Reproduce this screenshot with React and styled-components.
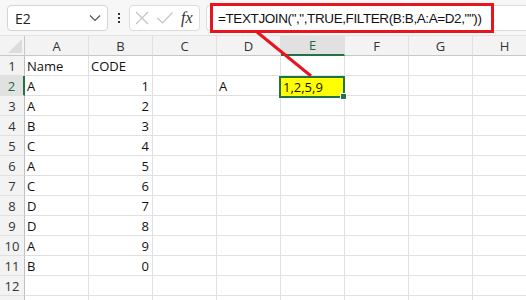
import React from 'react';
import styled, { createGlobalStyle } from 'styled-components';

const Global = createGlobalStyle`
  html, body { margin: 0; padding: 0; background: #ffffff; }
  body { font-family: "Open Sans", "Liberation Sans", sans-serif; overflow: hidden; }
`;

const Sheet = styled.div`
  position: relative;
  width: 526px;
  height: 300px;
  overflow: hidden;
  background: #fff;
`;

const Toolbar = styled.div`
  height: 36px;
  background: #f7f7f7;
  display: flex;
  align-items: flex-start;
  padding: 5px 0 0 7px;
  box-sizing: border-box;
  border-bottom: 1px solid #e3e3e3;
`;

const NameBox = styled.div`
  width: 101px;
  height: 26px;
  box-sizing: border-box;
  background: #fff;
  border: 1px solid #d4d4d4;
  border-radius: 4px;
  display: flex;
  align-items: center;
  justify-content: space-between;
  padding: 0 6px 0 7px;
  font-size: 14px;
  color: #222;
`;

const Dots = styled.div`
  width: 21px;
  display: flex;
  flex-direction: column;
  align-items: center;
  gap: 2px;
  padding-top: 8px;
  span {
    width: 2px;
    height: 2px;
    background: #333;
  }
`;

const FxGroup = styled.div`
  width: 71px;
  height: 26px;
  box-sizing: border-box;
  background: #fff;
  border: 1px solid #dcdcdc;
  border-radius: 4px;
  display: flex;
  align-items: center;
  padding-left: 4px;
  gap: 6px;
`;

const FxLabel = styled.span`
  font-family: "Liberation Serif", "DejaVu Serif", serif;
  font-style: italic;
  font-size: 16px;
  color: #333;
  margin-left: 1px;
`;

const FormulaBar = styled.div`
  flex: 1;
  margin-left: 6px;
  height: 26px;
  box-sizing: border-box;
  background: #fff;
  border: 1px solid #dcdcdc;
  border-right: none;
  border-radius: 4px 0 0 4px;
`;

const Highlight = styled.div`
  position: absolute;
  left: 210px;
  top: 3px;
  width: 284px;
  height: 30px;
  box-sizing: border-box;
  border: 3px solid #e8141f;
  display: flex;
  align-items: center;
  padding-left: 5px;
  font-family: "Liberation Sans", sans-serif;
  font-size: 13.5px;
  letter-spacing: -0.4px;
  color: #111;
  white-space: nowrap;
`;

const Arrow = styled.svg`
  position: absolute;
  left: 0;
  top: 0;
  pointer-events: none;
`;

const Grid = styled.div`
  display: grid;
  grid-template-columns: 25px repeat(8, 64px);
  grid-auto-rows: 20px;
  font-size: 13px;
  color: #111;
`;

const Corner = styled.div`
  background: #f3f3f3;
  border-right: 1px solid #c8c8c8;
  border-bottom: 1px solid #c8c8c8;
  box-sizing: border-box;
  position: relative;
  &::after {
    content: '';
    position: absolute;
    right: 2px;
    bottom: 2px;
    border-left: 14px solid transparent;
    border-bottom: 14px solid #dcdcdc;
  }
`;

const ColHead = styled.div`
  background: ${p => (p.$active ? '#e1e1e1' : '#f3f3f3')};
  color: ${p => (p.$active ? '#1d6b3f' : '#333')};
  border-right: 1px solid #e0e0e0;
  border-bottom: ${p => (p.$active ? '2px solid #217346' : '1px solid #c8c8c8')};
  box-sizing: border-box;
  display: flex;
  align-items: center;
  justify-content: center;
  font-size: 13px;
`;

const RowHead = styled.div`
  background: ${p => (p.$active ? '#e1e1e1' : '#f3f3f3')};
  color: ${p => (p.$active ? '#1d6b3f' : '#333')};
  border-right: ${p => (p.$active ? '2px solid #217346' : '1px solid #c0c0c0')};
  border-bottom: 1px solid #e0e0e0;
  box-sizing: border-box;
  display: flex;
  align-items: center;
  justify-content: center;
  font-size: 13px;
`;

const Cell = styled.div`
  border-right: 1px solid #e0e0e0;
  border-bottom: 1px solid #e0e0e0;
  box-sizing: border-box;
  display: flex;
  align-items: center;
  justify-content: ${p => (p.$num ? 'flex-end' : 'flex-start')};
  padding: 0 3px 0 2px;
  white-space: nowrap;
`;

const Selected = styled.div`
  position: absolute;
  left: 279px;
  top: 76px;
  width: 66px;
  height: 22px;
  box-sizing: border-box;
  border: 2px solid #217346;
  background: #ffff00;
  display: flex;
  align-items: center;
  padding-left: 2px;
  font-size: 13px;
  color: #111;
  &::after {
    content: '';
    position: absolute;
    right: -4px;
    bottom: -4px;
    width: 5px;
    height: 5px;
    background: #217346;
    border: 1px solid #fff;
  }
`;

const cols = ['A', 'B', 'C', 'D', 'E', 'F', 'G', 'H'];
const data = [
  ['Name', 'CODE'],
  ['A', 1], ['A', 2], ['B', 3], ['C', 4], ['A', 5],
  ['C', 6], ['D', 7], ['D', 8], ['A', 9], ['B', 0],
];

function App() {
  const rows = [];
  for (let r = 1; r <= 13; r++) {
    const row = data[r - 1] || [];
    rows.push(<RowHead key={'h' + r} $active={r === 2}>{r < 13 ? r : ''}</RowHead>);
    cols.forEach((c, i) => {
      let v = row[i];
      if (r === 2 && c === 'D') v = 'A';
      rows.push(
        <Cell key={c + r} $num={typeof v === 'number'}>{v}</Cell>
      );
    });
  }

  return (
    <Sheet>
      <Global />
      <Toolbar>
        <NameBox>
          <span>E2</span>
          <svg width="12" height="8" viewBox="0 0 12 8">
            <path d="M1 1.5 L6 6.5 L11 1.5" fill="none" stroke="#555" strokeWidth="1.2" />
          </svg>
        </NameBox>
        <Dots><span /><span /><span /></Dots>
        <FxGroup>
          <svg width="16" height="16" viewBox="0 0 16 16">
            <path d="M2 2 L14 14 M14 2 L2 14" stroke="#c4c4c4" strokeWidth="1.2" fill="none" />
          </svg>
          <svg width="18" height="16" viewBox="0 0 18 16">
            <path d="M1.5 8 L6.5 13 L16.5 2.5" stroke="#c4c4c4" strokeWidth="1.2" fill="none" />
          </svg>
          <FxLabel>fx</FxLabel>
        </FxGroup>
        <FormulaBar />
      </Toolbar>
      <Grid>
        <Corner />
        {cols.map(c => (
          <ColHead key={c} $active={c === 'E'}>{c}</ColHead>
        ))}
        {rows}
      </Grid>
      <Selected>1,2,5,9</Selected>
      <Highlight>=TEXTJOIN(",",TRUE,FILTER(B:B,A:A=D2,""))</Highlight>
      <Arrow width="526" height="300">
        <line x1="257" y1="32" x2="311" y2="76" stroke="#e8141f" strokeWidth="3" />
      </Arrow>
    </Sheet>
  );
}

export default App;
